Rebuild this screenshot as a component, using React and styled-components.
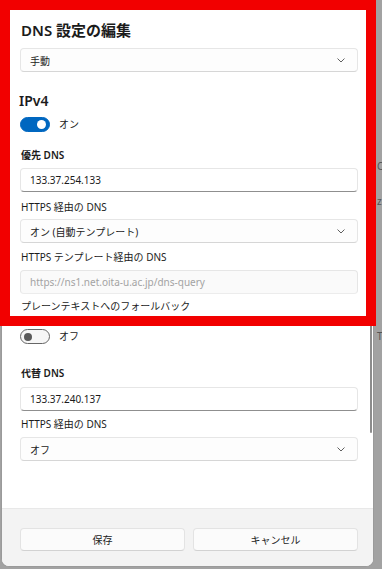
import React from "react";
import styled, { createGlobalStyle } from "styled-components";

const Global = createGlobalStyle`
  html, body { margin: 0; padding: 0; }
  body {
    background: #a2a2a2;
    font-family: "Noto Sans", "Noto Sans CJK JP", sans-serif;
    color: #1b1b1b;
    width: 382px;
    height: 569px;
    overflow: hidden;
  }
`;

const Page = styled.div`
  position: relative;
  width: 382px;
  height: 569px;
  display: flex;
`;

const Dialog = styled.div`
  position: relative;
  margin-left: 1px;
  width: 373px;
  height: 567px;
  box-sizing: border-box;
  background: #ffffff;
  border: 1px solid #9a9a9a;
  border-top: none;
  border-radius: 0 0 8px 8px;
  display: flex;
  flex-direction: column;
  overflow: hidden;
`;

const Body = styled.div`
  flex: 1;
  display: flex;
  flex-direction: column;
  padding: 0 15px 0 18px;
`;

const Title = styled.h1`
  margin: 20px 0 0 1px;
  font-size: 15px;
  line-height: 20px;
  font-weight: 600;
`;

const Section = styled.h2`
  margin: ${(p) => p.$mt}px 0 0 -1px;
  font-size: 14px;
  line-height: 18px;
  font-weight: 600;
`;

const Label = styled.div`
  margin-top: ${(p) => p.$mt}px;
  font-size: 10px;
  line-height: 14px;
  font-weight: ${(p) => (p.$bold ? 600 : 400)};
  padding-left: 1px;
`;

const Box = styled.div`
  margin-top: ${(p) => p.$mt}px;
  height: 24px;
  box-sizing: border-box;
  border: 1px solid #e6e6e6;
  border-radius: 4px;
  display: flex;
  align-items: center;
  justify-content: space-between;
  padding: 0 12px 0 9px;
  font-size: 10px;
`;

const TextBox = styled(Box)`
  background: ${(p) => (p.$disabled ? "#fafafa" : "#ffffff")};
  color: ${(p) => (p.$disabled ? "#a3a3a3" : "#1b1b1b")};
  border-bottom: 1px solid ${(p) => (p.$disabled ? "#ececec" : "#8f8f8f")};
`;

const Select = styled(Box)`
  background: #fdfdfd;
  border-bottom-color: #d6d6d6;
`;

const ToggleRow = styled.div`
  margin-top: ${(p) => p.$mt}px;
  display: flex;
  align-items: center;
  gap: 9px;
  font-size: 10px;
  line-height: 15px;
`;

const Track = styled.div`
  width: 30px;
  height: 15px;
  box-sizing: border-box;
  border-radius: 8px;
  display: flex;
  align-items: center;
  padding: 0 3px;
  justify-content: ${(p) => (p.$on ? "flex-end" : "flex-start")};
  background: ${(p) => (p.$on ? "#0067c0" : "#f6f6f6")};
  border: 1px solid ${(p) => (p.$on ? "#0067c0" : "#666")};
`;

const Knob = styled.div`
  width: ${(p) => (p.$on ? 9 : 8)}px;
  height: ${(p) => (p.$on ? 9 : 8)}px;
  border-radius: 50%;
  background: ${(p) => (p.$on ? "#ffffff" : "#5a5a5a")};
`;

const Footer = styled.div`
  height: 58px;
  background: #f3f3f3;
  border-top: 1px solid #e8e8e8;
  box-sizing: border-box;
  display: grid;
  grid-template-columns: 1fr 1fr;
  gap: 8px;
  padding: 19px 15px 0 18px;
  align-items: start;
`;

const Button = styled.button`
  height: 23px;
  border: 1px solid #e3e3e3;
  border-bottom-color: #d2d2d2;
  border-radius: 4px;
  background: #fbfbfb;
  font-family: inherit;
  font-size: 10px;
  color: #1b1b1b;
  padding: 0;
`;

const Highlight = styled.div`
  position: absolute;
  left: 0;
  top: 0;
  width: 376px;
  height: 326px;
  box-sizing: border-box;
  border: 10px solid #f20000;
  pointer-events: none;
`;

const ScrollThumb = styled.div`
  position: absolute;
  right: 1px;
  top: 150px;
  width: 2px;
  height: 283px;
  border-radius: 1px;
  background: #8c8c8c;
`;

const Behind = styled.div`
  position: absolute;
  left: 377px;
  top: ${(p) => p.$top}px;
  font-size: 10px;
  color: #555;
  line-height: 12px;
  white-space: nowrap;
`;

const Chevron = () => (
  <svg width="8" height="5" viewBox="0 0 8 5" fill="none">
    <path d="M0.8 0.8 L4 4 L7.2 0.8" stroke="#5f5f5f" strokeWidth="1" strokeLinecap="round" strokeLinejoin="round" />
  </svg>
);

const Toggle = ({ on, label, mt }) => (
  <ToggleRow $mt={mt}>
    <Track $on={on}>
      <Knob $on={on} />
    </Track>
    <span>{label}</span>
  </ToggleRow>
);

export default function App() {
  return (
    <Page>
      <Global />
      <Behind $top={160}>C</Behind>
      <Behind $top={195}>z</Behind>
      <Behind $top={330}>T</Behind>
      <Dialog>
        <Body>
          <Title>DNS 設定の編集</Title>
          <Select $mt={8}>
            <span>手動</span>
            <Chevron />
          </Select>
          <Section $mt={20}>IPv4</Section>
          <Toggle on label="オン" mt={7} />
          <Label $bold $mt={16}>優先 DNS</Label>
          <TextBox $mt={6}>133.37.254.133</TextBox>
          <Label $mt={8}>HTTPS 経由の DNS</Label>
          <Select $mt={5}>
            <span>オン (自動テンプレート)</span>
            <Chevron />
          </Select>
          <Label $mt={7}>HTTPS テンプレート経由の DNS</Label>
          <TextBox $mt={6} $disabled>https://ns1.net.oita-u.ac.jp/dns-query</TextBox>
          <Label $mt={5}>プレーンテキストへのフォールバック</Label>
          <Toggle label="オフ" mt={16} />
          <Label $bold $mt={22}>代替 DNS</Label>
          <TextBox $mt={7}>133.37.240.137</TextBox>
          <Label $mt={6}>HTTPS 経由の DNS</Label>
          <Select $mt={6}>
            <span>オフ</span>
            <Chevron />
          </Select>
        </Body>
        <Footer>
          <Button>保存</Button>
          <Button>キャンセル</Button>
        </Footer>
        <ScrollThumb />
      </Dialog>
      <Highlight />
    </Page>
  );
}
